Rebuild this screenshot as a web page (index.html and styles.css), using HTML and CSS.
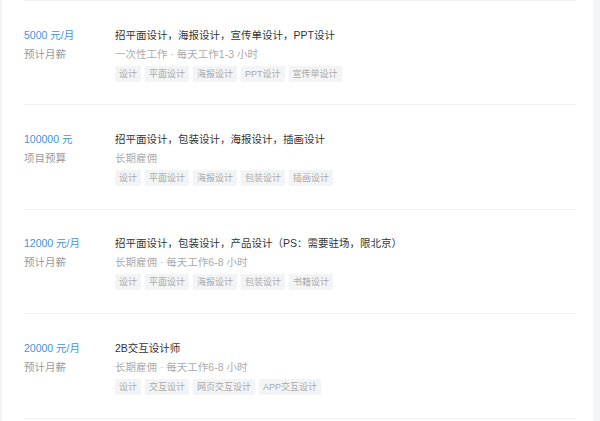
FILE: index.html
```html
<!DOCTYPE html>
<html lang="zh-CN">
<head>
<meta charset="utf-8">
<link rel="stylesheet" href="styles.css">
</head>
<body>
<div class="card">
  <ul class="list">
    <li class="item">
      <div class="pay">
        <div class="amount">5000 元/月</div>
        <div class="label">预计月薪</div>
      </div>
      <div class="info">
        <div class="title">招平面设计，海报设计，宣传单设计，PPT设计</div>
        <div class="meta">一次性工作 · 每天工作1-3 小时</div>
        <div class="tags"><span class="tag">设计</span><span class="tag">平面设计</span><span class="tag">海报设计</span><span class="tag">PPT设计</span><span class="tag">宣传单设计</span></div>
      </div>
    </li>
    <li class="item">
      <div class="pay">
        <div class="amount">100000 元</div>
        <div class="label">项目预算</div>
      </div>
      <div class="info">
        <div class="title">招平面设计，包装设计，海报设计，插画设计</div>
        <div class="meta">长期雇佣</div>
        <div class="tags"><span class="tag">设计</span><span class="tag">平面设计</span><span class="tag">海报设计</span><span class="tag">包装设计</span><span class="tag">插画设计</span></div>
      </div>
    </li>
    <li class="item">
      <div class="pay">
        <div class="amount">12000 元/月</div>
        <div class="label">预计月薪</div>
      </div>
      <div class="info">
        <div class="title">招平面设计，包装设计，产品设计（PS：需要驻场，限北京）</div>
        <div class="meta">长期雇佣 · 每天工作6-8 小时</div>
        <div class="tags"><span class="tag">设计</span><span class="tag">平面设计</span><span class="tag">海报设计</span><span class="tag">包装设计</span><span class="tag">书籍设计</span></div>
      </div>
    </li>
    <li class="item">
      <div class="pay">
        <div class="amount">20000 元/月</div>
        <div class="label">预计月薪</div>
      </div>
      <div class="info">
        <div class="title">2B交互设计师</div>
        <div class="meta">长期雇佣 · 每天工作6-8 小时</div>
        <div class="tags"><span class="tag">设计</span><span class="tag">交互设计</span><span class="tag">网页交互设计</span><span class="tag">APP交互设计</span></div>
      </div>
    </li>
  </ul>
</div>
</body>
</html>
```

FILE: styles.css
```css
html, body {
  margin: 0;
  padding: 0;
  background: #f4f5f9;
}
body {
  font-family: "Liberation Sans", "Noto Sans CJK SC", sans-serif;
  font-size: 10.5px;
  color: #333;
  height: 421px;
  overflow: hidden;
}
.card {
  margin-left: 2px;
  width: 591px;
  background: #fff;
  padding: 0 17px 0 22px;
  box-sizing: border-box;
  height: 421px;
}
.list {
  list-style: none;
  margin: 0;
  padding: 0;
  border-top: 1px solid #eef0f4;
}
.item {
  display: flex;
  height: 104.4px;
  box-sizing: border-box;
  padding-top: 24.5px;
  border-bottom: 1px solid #eef0f4;
}
.pay {
  width: 91px;
  flex: none;
}
.amount {
  color: #4294d8;
  line-height: 18px;
}
.label {
  color: #9a9a9a;
  line-height: 18px;
  margin-top: 1px;
}
.info {
  flex: 1;
}
.title {
  color: #333;
  line-height: 18px;
}
.meta {
  color: #ababab;
  line-height: 18px;
  margin-top: 1px;
}
.tags {
  display: flex;
  gap: 4px;
  margin-top: 3px;
}
.tag {
  display: inline-block;
  height: 16px;
  line-height: 16px;
  padding: 0 4px;
  font-size: 9px;
  color: #aaa;
  background: #f3f4f6;
}
```
